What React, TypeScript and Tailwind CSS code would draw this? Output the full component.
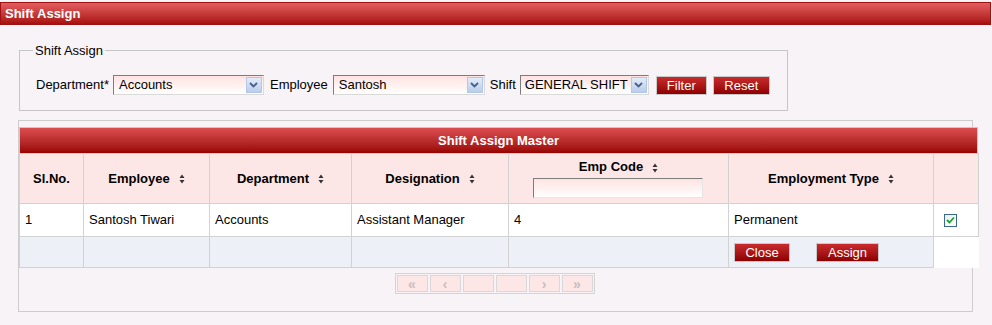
import React from "react";

const font = { fontFamily: '"Liberation Sans", Arial, sans-serif' };

function SortIcon() {
  return (
    <svg width="6" height="10" viewBox="0 0 6 10" className="ml-[9px] inline-block align-middle">
      <path d="M3 0.5 L5.5 4 L0.5 4 Z M3 9.5 L5.5 6 L0.5 6 Z" fill="#333" />
    </svg>
  );
}

function DropBtn() {
  return (
    <div className="my-[1px] mr-[1px] flex w-[16px] items-center justify-center border border-[#b3c7e6] bg-gradient-to-b from-[#e3ecfa] to-[#b9cdeb]">
      <svg width="9" height="6" viewBox="0 0 9 6">
        <path d="M1 1 L4.5 4.5 L8 1" stroke="#4a5f86" strokeWidth="1.8" fill="none" />
      </svg>
    </div>
  );
}

function RedBtn({ children, className }: { children: React.ReactNode; className: string }) {
  return (
    <div
      className={
        "flex h-[19px] items-center justify-center border border-[#c9c9c9] bg-gradient-to-b from-[#c92a2c] to-[#8e0000] text-[13px] leading-none text-white " +
        className
      }
    >
      {children}
    </div>
  );
}

export default function App() {
  return (
    <div className="relative h-[325px] w-[992px] overflow-hidden bg-[#f7f3f6] text-[13px] text-black" style={font}>
      {/* Title bar */}
      <div className="mt-[2px] flex h-[23px] w-[991px] items-center border border-[#a01212] bg-gradient-to-b from-[#e35c5e] to-[#a80c0e] pl-[4px] text-[13px] font-bold text-white">
        Shift Assign
      </div>

      {/* Fieldset */}
      <fieldset className="ml-[19px] mt-[18px] h-[68px] w-[769px] border border-[#c6c6c6]">
        <legend className="ml-[13px] px-[2px] leading-[15px]">Shift Assign</legend>
        <div className="mt-[17px] flex items-center pl-[16px]">
          <span>Department*</span>
          <div className="ml-[4px] flex h-[20px] w-[151px] items-stretch border border-b-[#dadada] border-l-[#7c7c7c] border-r-[#dadada] border-t-[#7c7c7c] bg-gradient-to-b from-[#ffe2e2] to-white">
            <span className="flex flex-1 items-center pl-[5px]">Accounts</span>
            <DropBtn />
          </div>
          <span className="ml-[6px]">Employee</span>
          <div className="ml-[5px] flex h-[20px] w-[152px] items-stretch border border-b-[#dadada] border-l-[#7c7c7c] border-r-[#dadada] border-t-[#7c7c7c] bg-gradient-to-b from-[#ffe2e2] to-white">
            <span className="flex flex-1 items-center pl-[5px]">Santosh</span>
            <DropBtn />
          </div>
          <span className="ml-[5px]">Shift</span>
          <div className="ml-[4px] flex h-[20px] w-[129px] items-stretch border border-b-[#dadada] border-l-[#7c7c7c] border-r-[#dadada] border-t-[#7c7c7c] bg-gradient-to-b from-[#ffe2e2] to-white">
            <span className="flex flex-1 items-center pl-[4px]">GENERAL SHIFT</span>
            <DropBtn />
          </div>
          <RedBtn className="ml-[7px] w-[51px]">Filter</RedBtn>
          <RedBtn className="ml-[6px] w-[57px]">Reset</RedBtn>
        </div>
      </fieldset>

      {/* Master box */}
      <div className="ml-[18px] mt-[9px] h-[192px] w-[955px] border border-[#cdcdcd] pt-[6px]">
        <div className="w-[959px]">
          <div className="flex h-[26px] items-center justify-center border border-[#c9c9c9] border-b-0 bg-gradient-to-b from-[#dc4c4f] to-[#990000] text-[13px] font-bold text-white">
            Shift Assign Master
          </div>
          <table className="w-[959px] table-fixed border-collapse">
            <colgroup>
              <col className="w-[64px]" />
              <col className="w-[126px]" />
              <col className="w-[142px]" />
              <col className="w-[157px]" />
              <col className="w-[220px]" />
              <col className="w-[205px]" />
              <col className="w-[45px]" />
            </colgroup>
            <tbody>
              <tr className="h-[50px] bg-[#fde6e6] font-bold">
                <td className="border border-[#d2d2d2] text-center">Sl.No.</td>
                <td className="border border-[#d2d2d2] text-center">
                  Employee
                  <SortIcon />
                </td>
                <td className="border border-[#d2d2d2] text-center">
                  Department
                  <SortIcon />
                </td>
                <td className="border border-[#d2d2d2] text-center">
                  Designation
                  <SortIcon />
                </td>
                <td className="border border-[#d2d2d2] text-center align-top">
                  <div className="mt-[5px] leading-[15px]">
                    Emp Code
                    <SortIcon />
                  </div>
                  <div className="ml-[24px] mt-[4px] h-[20px] w-[170px] border border-b-[#e6e6e6] border-l-[#7c7c7c] border-r-[#e6e6e6] border-t-[#7c7c7c] bg-gradient-to-b from-[#ffe2e2] to-white" />
                </td>
                <td className="border border-[#d2d2d2] text-center">
                  Employment Type
                  <SortIcon />
                </td>
                <td className="border border-[#d2d2d2]"></td>
              </tr>
              <tr className="h-[33px] bg-white">
                <td className="border border-[#d2d2d2] pl-[5px]">1</td>
                <td className="border border-[#d2d2d2] pl-[5px]">Santosh Tiwari</td>
                <td className="border border-[#d2d2d2] pl-[5px]">Accounts</td>
                <td className="border border-[#d2d2d2] pl-[5px]">Assistant Manager</td>
                <td className="border border-[#d2d2d2] pl-[5px]">4</td>
                <td className="border border-[#d2d2d2] pl-[5px]">Permanent</td>
                <td className="border border-[#d2d2d2] pl-[10px]">
                  <div className="flex h-[13px] w-[13px] items-center justify-center border border-[#3d6a8c] bg-gradient-to-br from-[#e8eef4] to-white">
                    <svg width="9" height="8" viewBox="0 0 9 8">
                      <path d="M1 4 L3.5 6.5 L8 1.5" stroke="#22a02a" strokeWidth="1.8" fill="none" />
                    </svg>
                  </div>
                </td>
              </tr>
              <tr className="h-[31px] bg-[#eef0f8]">
                <td className="border border-[#d2d2d2]"></td>
                <td className="border border-[#d2d2d2]"></td>
                <td className="border border-[#d2d2d2]"></td>
                <td className="border border-[#d2d2d2]"></td>
                <td className="border border-[#d2d2d2]"></td>
                <td className="border border-[#d2d2d2] pl-[5px]">
                  <div className="flex items-center">
                    <RedBtn className="w-[56px]">Close</RedBtn>
                    <RedBtn className="ml-[26px] w-[63px]">Assign</RedBtn>
                  </div>
                </td>
                <td className="border-t border-[#d2d2d2] bg-white"></td>
              </tr>
            </tbody>
          </table>
        </div>

        {/* Pager */}
        <div className="mt-[5px] flex justify-center pr-[2px]">
          <div className="flex h-[21px] gap-[2px] border border-[#d4d4d4] p-[1px]">
            {["«", "‹", "", "", "›", "»"].map((t, i) => (
              <div
                key={i}
                className="flex h-[17px] w-[31px] items-center justify-center border border-[#d8d8d8] bg-[#fde6e6] text-[14px] font-bold leading-none text-[#cdbdbd]"
              >
                {t}
              </div>
            ))}
          </div>
        </div>
      </div>
    </div>
  );
}
